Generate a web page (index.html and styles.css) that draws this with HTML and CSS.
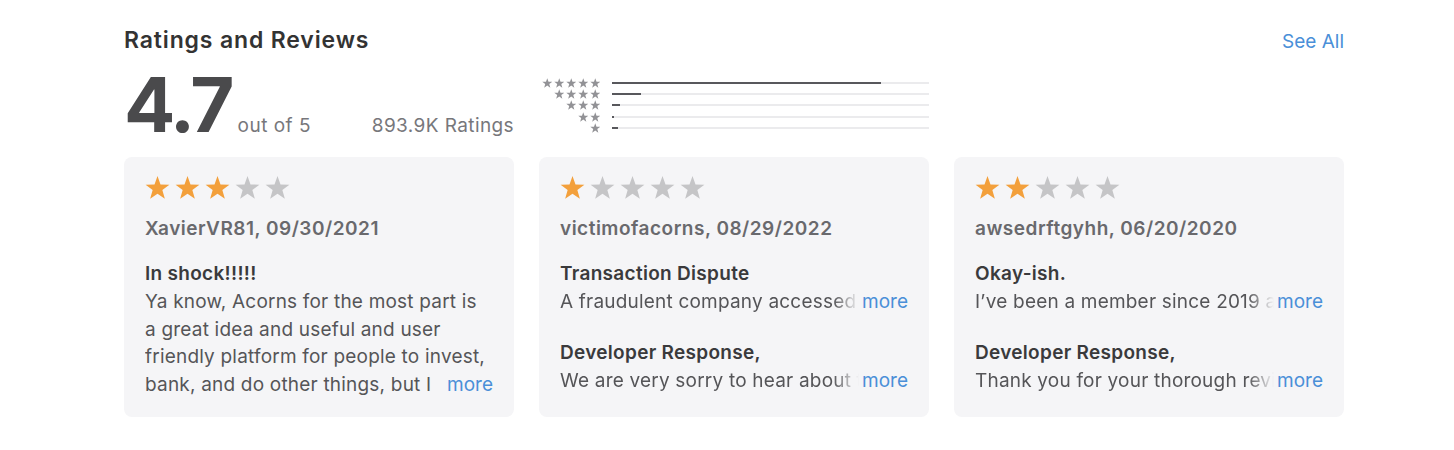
FILE: index.html
```html
<!DOCTYPE html>
<html lang="en">

<head>
    <meta charset="UTF-8">
    <meta name="viewport" content="width=device-width, initial-scale=1.0">
    <title>Ratings and Reviews</title>
    <link rel="stylesheet" href="styles.css">
</head>

<body>
    <svg class="defs" aria-hidden="true">
        <symbol id="star" viewBox="0 0 24 23">
            <polygon points="12,0.5 14.88,8.54 23.41,8.79 16.66,14.01 19.05,22.21 12,17.4 4.95,22.21 7.34,14.01 0.59,8.79 9.12,8.54" />
        </symbol>
    </svg>

    <main class="ratings">
        <header class="section-head">
            <h2>Ratings and Reviews</h2>
            <a href="#" class="link">See All</a>
        </header>

        <div class="summary">
            <div class="score">
                <span class="score-value">4.7</span>
                <span class="score-out">out of 5</span>
                <span class="score-count">893.9K Ratings</span>
            </div>
            <div class="histogram">
                <div class="hist-row">
                    <span class="hist-stars"><svg><use href="#star"/></svg><svg><use href="#star"/></svg><svg><use href="#star"/></svg><svg><use href="#star"/></svg><svg><use href="#star"/></svg></span>
                    <span class="hist-bar"><span class="hist-fill" style="width: 85%"></span></span>
                </div>
                <div class="hist-row">
                    <span class="hist-stars"><svg><use href="#star"/></svg><svg><use href="#star"/></svg><svg><use href="#star"/></svg><svg><use href="#star"/></svg></span>
                    <span class="hist-bar"><span class="hist-fill" style="width: 9%"></span></span>
                </div>
                <div class="hist-row">
                    <span class="hist-stars"><svg><use href="#star"/></svg><svg><use href="#star"/></svg><svg><use href="#star"/></svg></span>
                    <span class="hist-bar"><span class="hist-fill" style="width: 2.5%"></span></span>
                </div>
                <div class="hist-row">
                    <span class="hist-stars"><svg><use href="#star"/></svg><svg><use href="#star"/></svg></span>
                    <span class="hist-bar"><span class="hist-fill" style="width: 0.6%"></span></span>
                </div>
                <div class="hist-row">
                    <span class="hist-stars"><svg><use href="#star"/></svg></span>
                    <span class="hist-bar"><span class="hist-fill" style="width: 1.8%"></span></span>
                </div>
            </div>
        </div>

        <div class="reviews">
            <article class="review">
                <div class="stars">
                    <svg class="on"><use href="#star"/></svg><svg class="on"><use href="#star"/></svg><svg class="on"><use href="#star"/></svg><svg><use href="#star"/></svg><svg><use href="#star"/></svg>
                </div>
                <p class="author">XavierVR81, 09/30/2021</p>
                <h3 class="review-title">In shock!!!!!</h3>
                <div class="review-text">
                    <a href="#" class="more">more</a>
                    <p>Ya know, Acorns for the most part is a great idea and useful and user friendly platform for people to invest, bank, and do other things, but I have been having issues with my account for weeks now.</p>
                </div>
            </article>

            <article class="review">
                <div class="stars">
                    <svg class="on"><use href="#star"/></svg><svg><use href="#star"/></svg><svg><use href="#star"/></svg><svg><use href="#star"/></svg><svg><use href="#star"/></svg>
                </div>
                <p class="author">victimofacorns, 08/29/2022</p>
                <h3 class="review-title">Transaction Dispute</h3>
                <div class="review-line">
                    <p>A fraudulent company accessed my account and took money out.</p>
                    <a href="#" class="more">more</a>
                </div>
                <h3 class="review-title response">Developer Response,</h3>
                <div class="review-line">
                    <p>We are very sorry to hear about this experience with your account.</p>
                    <a href="#" class="more">more</a>
                </div>
            </article>

            <article class="review">
                <div class="stars">
                    <svg class="on"><use href="#star"/></svg><svg class="on"><use href="#star"/></svg><svg><use href="#star"/></svg><svg><use href="#star"/></svg><svg><use href="#star"/></svg>
                </div>
                <p class="author">awsedrftgyhh, 06/20/2020</p>
                <h3 class="review-title">Okay-ish.</h3>
                <div class="review-line">
                    <p>I’ve been a member since 2019 and have been mostly happy.</p>
                    <a href="#" class="more">more</a>
                </div>
                <h3 class="review-title response">Developer Response,</h3>
                <div class="review-line">
                    <p>Thank you for your thorough review and for being a member.</p>
                    <a href="#" class="more">more</a>
                </div>
            </article>
        </div>
    </main>
</body>

</html>
```

FILE: styles.css
```css
body {
    margin: 0;
    padding: 0;
    background: #fff;
    font-family: Inter, 'Liberation Sans', sans-serif;
    color: #333;
}

.defs {
    position: absolute;
    width: 0;
    height: 0;
}

.ratings {
    width: 1220px;
    padding: 26px 0 0 124px;
}

.section-head {
    display: flex;
    justify-content: space-between;
    align-items: center;
}

.section-head h2 {
    margin: 0;
    font-size: 23px;
    line-height: 28px;
    font-weight: 600;
    letter-spacing: 0.85px;
    color: #333;
}

.link {
    color: #4a8fd8;
    text-decoration: none;
    font-size: 19px;
    margin-top: 2px;
}

.summary,
.reviews {
    display: grid;
    grid-template-columns: repeat(3, 390px);
    column-gap: 25px;
}

.summary {
    margin-top: 10px;
    height: 93px;
}

.score {
    display: flex;
    align-items: baseline;
}

.score-value {
    font-size: 76px;
    line-height: 80px;
    font-weight: 700;
    letter-spacing: -3px;
    color: #4a4a4c;
}

.score-out {
    margin-left: 6px;
    font-size: 19px;
    letter-spacing: 0.5px;
    color: #77777b;
}

.score-count {
    margin-left: auto;
    font-size: 19px;
    letter-spacing: 0.4px;
    color: #77777b;
}

.histogram {
    padding-top: 13px;
}

.hist-row {
    display: flex;
    align-items: center;
    height: 11.3px;
}

.hist-stars {
    width: 61px;
    display: flex;
    justify-content: flex-end;
    gap: 1.5px;
}

.hist-stars svg {
    width: 10.5px;
    height: 10px;
    fill: #929296;
}

.hist-bar {
    flex: 1;
    margin-left: 12px;
    height: 2px;
    background: #ebebed;
}

.hist-fill {
    display: block;
    height: 2px;
    background: #58585c;
}

.review {
    background: #f5f5f7;
    border-radius: 8px;
    padding: 18px 21px 0;
    height: 260px;
    box-sizing: border-box;
}

.stars {
    display: flex;
    gap: 5px;
    height: 29px;
}

.stars svg {
    width: 25px;
    height: 25px;
    fill: #c5c5c7;
}

.stars svg.on {
    fill: #f3a03c;
}

.author {
    margin: 12px 0 0;
    font-size: 19px;
    line-height: 26px;
    font-weight: 600;
    letter-spacing: 0.5px;
    color: #69696d;
}

.review-title {
    margin: 19px 0 0;
    font-size: 19px;
    line-height: 26px;
    font-weight: 600;
    letter-spacing: 0.3px;
    color: #3a3a3c;
}

.review-title.response {
    margin-top: 24.5px;
}

.review-text p,
.review-line p {
    margin: 0;
    font-size: 19px;
    line-height: 27.5px;
    letter-spacing: 0.2px;
    color: #555558;
}

.more {
    font-size: 19px;
    line-height: 27.5px;
    color: #4a8fd8;
    text-decoration: none;
}

/* one line, faded into the "more" link */
.review-line {
    display: flex;
    margin-top: 1px;
}

.review-line p {
    flex: 1;
    min-width: 0;
    overflow: hidden;
    white-space: nowrap;
    -webkit-mask-image: linear-gradient(to right, #000 calc(100% - 26px), transparent);
    mask-image: linear-gradient(to right, #000 calc(100% - 26px), transparent);
}

.review-line .more {
    margin-left: 3px;
}

/* four lines, "more" floated onto the last one */
.review-text {
    margin-top: 1px;
    height: 110px;
    overflow: hidden;
}

.review-text::before {
    content: '';
    float: right;
    width: 0;
    height: 82.5px;
}

.review-text .more {
    float: right;
    clear: right;
    position: relative;
    padding-left: 8px;
}

.review-text .more::before {
    content: '';
    position: absolute;
    top: 0;
    bottom: 0;
    left: -10px;
    width: 18px;
    background: linear-gradient(to right, rgba(245, 245, 247, 0), #f5f5f7);
}
```
